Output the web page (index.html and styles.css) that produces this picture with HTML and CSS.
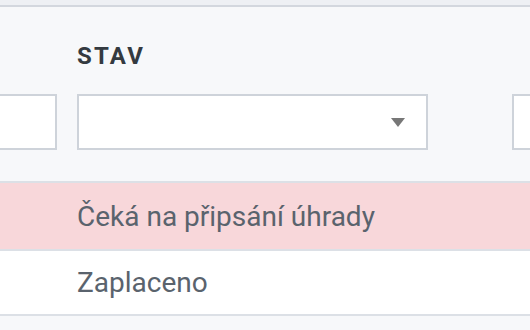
FILE: index.html
```html
<!DOCTYPE html>
<html lang="cs">
<head>
<meta charset="utf-8">
<link rel="stylesheet" href="styles.css">
</head>
<body>
<div class="topband"></div>
<div class="table">
  <div class="head">
    <div class="cell first">
      <div class="label">&nbsp;</div>
      <div class="input clip"></div>
    </div>
    <div class="cell">
      <div class="label">STAV</div>
      <div class="input select">
        <svg class="caret" width="14" height="9" viewBox="0 0 14 9"><path d="M0 0H14L7 9Z" fill="#777"/></svg>
      </div>
    </div>
    <div class="cell">
      <div class="label">&nbsp;</div>
      <div class="input wide"></div>
    </div>
  </div>
  <div class="row pending">
    <div class="cell"></div>
    <div class="cell text">Čeká na připsání úhrady</div>
    <div class="cell"></div>
  </div>
  <div class="row paid">
    <div class="cell"></div>
    <div class="cell text">Zaplaceno</div>
    <div class="cell"></div>
  </div>
</div>
</body>
</html>
```
FILE: styles.css
```css
html, body {
  margin: 0;
  padding: 0;
  background: #f7f8fa;
  font-family: Roboto, "Liberation Sans", sans-serif;
  overflow: hidden;
}
.topband {
  height: 5px;
  background: #eef0f4;
}
.table {
  border-top: 2px solid #d3d7de;
  overflow: hidden;
}
.head, .row {
  display: grid;
  grid-template-columns: 57px 415px 1fr;
  column-gap: 20px;
}
.head {
  background: #f7f8fa;
  padding: 35px 0 31px;
  border-bottom: 2px solid #dce0e6;
}
.cell {
  min-width: 0;
  overflow: hidden;
}
.first {
  display: flex;
  flex-direction: column;
  align-items: flex-end;
}
.label {
  font-size: 24px;
  line-height: 28px;
  font-weight: 700;
  letter-spacing: 2.2px;
  color: #343a40;
  margin-bottom: 24px;
}
.input {
  box-sizing: border-box;
  height: 56px;
  width: 351px;
  background: #fff;
  border: 2px solid #ced3da;
}
.input.clip {
  width: 57px;
  border-left: 0;
  flex-shrink: 0;
}
.input.wide {
  width: auto;
  border-right: 0;
}
.select {
  display: flex;
  align-items: center;
  justify-content: flex-end;
  padding-right: 21px;
}
.caret {
  display: block;
}
.row {
  border-bottom: 2px solid #dce0e6;
}
.pending {
  background: #f8d7da;
  height: 66px;
}
.paid {
  background: #fff;
  height: 63px;
}
.text {
  font-size: 28px;
  color: #5a636d;
  display: flex;
  align-items: center;
  white-space: nowrap;
}
```
